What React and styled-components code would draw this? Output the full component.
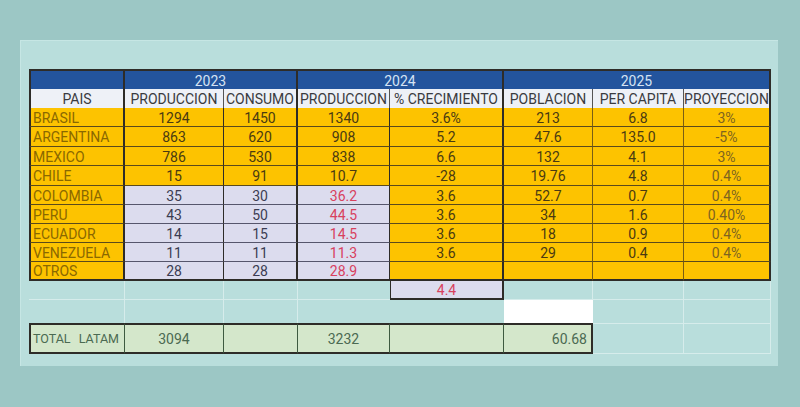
import React from "react";
import styled, { createGlobalStyle } from "styled-components";

const Global = createGlobalStyle`
  html, body { margin: 0; padding: 0; background: #9cc7c5; }
  body { font-family: Roboto, "Liberation Sans", sans-serif; }
`;

const DARK = "#2e2c28";
const YLINE = "#5a4a1c";
const LLINE = "#56566c";
const FAINT = "rgba(255,255,255,0.42)";
const GLINE = "#3e5a40";

const TONES = {
  year: { bg: "#23549d", ink: "#d5e3f3" },
  head: { bg: "#eef1f7", ink: "#3a3b40" },
  yellow: { bg: "#fdc300", ink: "#4a3a12" },
  lav: { bg: "#dcdcee", ink: "#3b3c52" },
  green: { bg: "#d4e7cb", ink: "#4b6a52" },
  white: { bg: "#ffffff", ink: "#333" },
  none: { bg: "transparent", ink: "#333" },
};

const Page = styled.div`
  width: 800px;
  height: 407px;
  box-sizing: border-box;
  padding: 40px 0 0 20px;
  background: #9cc7c5;
`;

const Panel = styled.div`
  width: 758px;
  height: 326px;
  box-sizing: border-box;
  padding: 28px 8px 0 8px;
  background: #b9dedc;
  border-top: 1px solid #c6e6e4;
  border-left: 1px solid #c6e6e4;
`;

const Sheet = styled.div`
  display: grid;
  grid-template-columns: 96px 99px 74px 92px 114px 89px 91px 87px;
  grid-template-rows: 20px 19px 19px 20px 19px 20px 19px 19px 19px 19px 19px 19px 23px 31px;
  font-size: 14px;
  line-height: 1;
`;

const Cell = styled.div`
  box-sizing: border-box;
  grid-column: ${(p) => (p.$span ? `span ${p.$span}` : "auto")};
  display: flex;
  align-items: center;
  justify-content: ${(p) =>
    p.$align === "left" ? "flex-start" : p.$align === "right" ? "flex-end" : "center"};
  padding: ${(p) => (p.$align === "left" ? "1px 0 0 2px" : p.$align === "right" ? "1px 4px 0 0" : "1px 0 0 0")};
  background: ${(p) => TONES[p.$tone].bg};
  color: ${(p) => p.$ink || TONES[p.$tone].ink};
  font-size: ${(p) => (p.$small ? "12.5px" : "inherit")};
  word-spacing: ${(p) => (p.$small ? "5px" : "normal")};
  border-top: ${(p) => p.$t || "none"};
  border-left: ${(p) => p.$l || "none"};
  border-right: ${(p) => p.$r || "none"};
  border-bottom: ${(p) => p.$b || "none"};
  white-space: pre;
  overflow: hidden;
`;

const rows = [
  ["BRASIL", "1294", "1450", "1340", "3.6%", "213", "6.8", "3%"],
  ["ARGENTINA", "863", "620", "908", "5.2", "47.6", "135.0", "-5%"],
  ["MEXICO", "786", "530", "838", "6.6", "132", "4.1", "3%"],
  ["CHILE", "15", "91", "10.7", "-28", "19.76", "4.8", "0.4%"],
  ["COLOMBIA", "35", "30", "36.2", "3.6", "52.7", "0.7", "0.4%"],
  ["PERU", "43", "50", "44.5", "3.6", "34", "1.6", "0.40%"],
  ["ECUADOR", "14", "15", "14.5", "3.6", "18", "0.9", "0.4%"],
  ["VENEZUELA", "11", "11", "11.3", "3.6", "29", "0.4", "0.4%"],
  ["OTROS", "28", "28", "28.9", "", "", "", ""],
];

const heads = ["PAIS", "PRODUCCION", "CONSUMO", "PRODUCCION", "% CRECIMIENTO", "POBLACION", "PER CAPITA", "PROYECCION"];

const b = (w, c) => `${w}px solid ${c}`;

export default function App() {
  const cells = [];
  cells.push(<Cell key="y0" $tone="year" $t={b(2, DARK)} $l={b(2, DARK)} $r={b(2, DARK)} />);
  cells.push(<Cell key="y1" $tone="year" $span={2} $t={b(2, DARK)} $r={b(2, DARK)}>2023</Cell>);
  cells.push(<Cell key="y2" $tone="year" $span={2} $t={b(2, DARK)} $r={b(2, DARK)}>2024</Cell>);
  cells.push(<Cell key="y3" $tone="year" $span={3} $t={b(2, DARK)} $r={b(2, DARK)}>2025</Cell>);
  heads.forEach((h, i) => {
    const groupEnd = i === 0 || i === 2 || i === 4 || i === 7;
    cells.push(
      <Cell
        key={"h" + i}
        $tone="head"
        $l={i === 0 ? b(2, DARK) : undefined}
        $r={b(groupEnd ? 2 : 1, groupEnd ? DARK : "#555")}
      >
        {h}
      </Cell>
    );
  });
  rows.forEach((r, ri) => {
    const last = ri === rows.length - 1;
    r.forEach((v, ci) => {
      const lav = ri >= 4 && ci >= 1 && ci <= 3;
      const groupEnd = ci === 0 || ci === 2 || ci === 4 || ci === 7;
      let ink;
      if (ci === 0) ink = "#8a6800";
      else if (lav && ci === 3) ink = "#d8415e";
      else if (ci === 7) ink = "#7d6420";
      const lineColor = lav ? LLINE : YLINE;
      cells.push(
        <Cell
          key={`d${ri}-${ci}`}
          $tone={lav ? "lav" : "yellow"}
          $align={ci === 0 ? "left" : "center"}
          $ink={ink}
          $l={ci === 0 ? b(2, DARK) : undefined}
          $r={groupEnd ? b(2, DARK) : b(1, ci >= 5 ? "#7a5e14" : DARK)}
          $b={last ? b(2, DARK) : b(1, lineColor)}
        >
          {v}
        </Cell>
      );
    });
  });
  for (let ci = 0; ci < 8; ci++) {
    if (ci === 4) {
      cells.push(
        <Cell key="a4" $tone="lav" $ink="#d8415e" $b={b(2, DARK)} $r={b(2, DARK)} $l={b(1, DARK)}>
          4.4
        </Cell>
      );
    } else {
      cells.push(<Cell key={"a" + ci} $tone="none" $r={ci === 3 ? undefined : b(1, FAINT)} $b={b(1, FAINT)} />);
    }
  }
  for (let ci = 0; ci < 8; ci++) {
    if (ci === 5) {
      cells.push(<Cell key="b5" $tone="white" />);
    } else {
      cells.push(
        <Cell key={"b" + ci} $tone="none" $r={ci === 4 || ci === 3 ? undefined : b(1, FAINT)} />
      );
    }
  }
  const totals = ["TOTAL LATAM", "3094", "", "3232", "", "60.68"];
  totals.forEach((v, ci) => {
    cells.push(
      <Cell
        key={"t" + ci}
        $tone="green"
        $small={ci === 0}
        $align={ci === 0 ? "left" : ci === 5 ? "right" : "center"}
        $t={b(2, DARK)}
        $b={b(2, DARK)}
        $l={ci === 0 ? b(2, DARK) : undefined}
        $r={ci === 5 ? b(2, DARK) : b(1, GLINE)}
      >
        {v}
      </Cell>
    );
  });
  cells.push(<Cell key="t6" $tone="none" $t={b(1, FAINT)} $r={b(1, FAINT)} $b={b(1, FAINT)} />);
  cells.push(<Cell key="t7" $tone="none" $t={b(1, FAINT)} $r={b(1, FAINT)} $b={b(1, FAINT)} />);

  return (
    <>
      <Global />
      <Page>
        <Panel>
          <Sheet>{cells}</Sheet>
        </Panel>
      </Page>
    </>
  );
}
